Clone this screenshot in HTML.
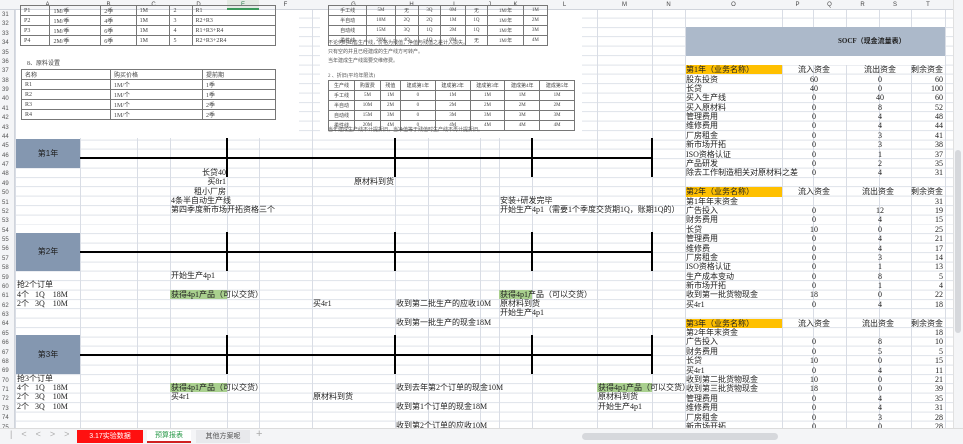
<!DOCTYPE html>
<html><head><meta charset="utf-8"><style>
*{margin:0;padding:0;box-sizing:border-box}
body{width:963px;height:444px;overflow:hidden;background:#fff;position:relative;font-family:"Liberation Sans","Noto Sans CJK SC",sans-serif;color:#222}
.a{position:absolute}
.t{position:absolute;font-size:8px;line-height:9px;white-space:nowrap;font-family:"Liberation Serif","Noto Sans CJK SC",serif}
.r{text-align:right}
.c{text-align:center}
.v{position:absolute;top:10px;height:418px;width:1px;background:#d9dde5}
.tl{position:absolute;width:2px;background:#000}
.pic{position:absolute;background:#fff}
table{border-collapse:collapse;position:absolute;font-size:6px;font-family:"Liberation Serif","Noto Sans CJK SC",serif;color:#444}
td{border:1px solid #777;padding:0 3px;height:10px;white-space:nowrap}
.g{background:#a9d08e}
.o{background:#ffc000}
.hd{position:absolute;top:0;height:10px;font-size:6px;line-height:10px;text-align:center;color:#444}
</style></head><body>
<!-- grid rows -->
<div class="a" style="left:15px;top:9px;width:940px;height:419px;background:repeating-linear-gradient(to bottom,transparent 0,transparent 8.4px,#dfe3ea 8.4px,#dfe3ea 9.38px);background-position:0 0.1px"></div>
<!-- vertical lines -->
<div class="v" style="left:15px"></div><div class="v" style="left:80px"></div><div class="v" style="left:137px"></div><div class="v" style="left:170px"></div><div class="v" style="left:227px"></div><div class="v" style="left:259px"></div><div class="v" style="left:312px"></div><div class="v" style="left:395px"></div><div class="v" style="left:428px"></div><div class="v" style="left:480px"></div><div class="v" style="left:499px"></div><div class="v" style="left:532px"></div><div class="v" style="left:597px"></div><div class="v" style="left:652px"></div><div class="v" style="left:685px"></div><div class="v" style="left:782px"></div><div class="v" style="left:813px"></div><div class="v" style="left:846px"></div><div class="v" style="left:879px"></div><div class="v" style="left:911px"></div><div class="v" style="left:945px"></div>
<!-- header row -->
<div class="a" style="left:0;top:0;width:963px;height:10px;background:#f4f5f7;border-bottom:1px solid #d0d4db"></div>
<div class="a" style="left:227px;top:0;width:32px;height:10px;background:#e4ebe4;border-bottom:2px solid #3a9a5a"></div>
<div class="hd" style="left:15px;width:65px">A</div><div class="hd" style="left:80px;width:57px">B</div><div class="hd" style="left:137px;width:33px">C</div><div class="hd" style="left:170px;width:57px">D</div><div class="hd" style="left:227px;width:32px;color:#2a7a4a">E</div><div class="hd" style="left:259px;width:53px">F</div><div class="hd" style="left:312px;width:83px">G</div><div class="hd" style="left:395px;width:33px">H</div><div class="hd" style="left:428px;width:52px">I</div><div class="hd" style="left:480px;width:19px">J</div><div class="hd" style="left:499px;width:33px">K</div><div class="hd" style="left:532px;width:65px">L</div><div class="hd" style="left:597px;width:55px">M</div><div class="hd" style="left:652px;width:33px">N</div><div class="hd" style="left:685px;width:97px">O</div><div class="hd" style="left:782px;width:31px">P</div><div class="hd" style="left:813px;width:33px">Q</div><div class="hd" style="left:846px;width:33px">R</div><div class="hd" style="left:879px;width:32px">S</div><div class="hd" style="left:911px;width:34px">T</div>
<!-- row numbers -->
<div class="a" style="left:0;top:10px;width:15px;height:418px;background:#f4f5f7;border-right:1px solid #d0d4db;font-size:6px;line-height:9.38px;color:#555;padding-left:2px;padding-top:1px">31<br>32<br>33<br>34<br>35<br>36<br>37<br>38<br>39<br>40<br>41<br>42<br>43<br>44<br>45<br>46<br>47<br>48<br>49<br>50<br>51<br>52<br>53<br>54<br>55<br>56<br>57<br>58<br>59<br>60<br>61<br>62<br>63<br>64<br>65<br>66<br>67<br>68<br>69<br>70<br>71<br>72<br>73<br>74<br>75</div>

<!-- pictures top -->
<div class="pic" style="left:16px;top:10px;width:283px;height:128px"></div>
<div class="pic" style="left:320px;top:10px;width:262px;height:128px"></div>
<table style="left:20px;top:5px;width:256px"><tr><td>P1</td><td>1M/季</td><td>2季</td><td>1M</td><td>2</td><td>R1</td></tr><tr><td>P2</td><td>1M/季</td><td>4季</td><td>1M</td><td>3</td><td>R2+R3</td></tr><tr><td>P3</td><td>1M/季</td><td>6季</td><td>1M</td><td>4</td><td>R1+R3+R4</td></tr><tr><td>P4</td><td>2M/季</td><td>6季</td><td>1M</td><td>5</td><td>R2+R3+2R4</td></tr></table>
<div class="t" style="left:27px;top:60px;font-size:6px;color:#444">8、原料设置</div>
<table style="left:21px;top:69px;width:255px"><tr><td style="width:89px">名称</td><td style="width:92px">购买价格</td><td>提前期</td></tr><tr><td>R1</td><td>1M/个</td><td>1季</td></tr><tr><td>R2</td><td>1M/个</td><td>1季</td></tr><tr><td>R3</td><td>1M/个</td><td>2季</td></tr><tr><td>R4</td><td>1M/个</td><td>2季</td></tr></table>
<table style="left:328px;top:5px;width:220px;font-size:5px;text-align:center"><tr><td>手工线</td><td>5M</td><td>无</td><td>3Q</td><td>0M</td><td>无</td><td>1M/年</td><td>1M</td></tr><tr><td>半自动</td><td>10M</td><td>2Q</td><td>2Q</td><td>1M</td><td>1Q</td><td>1M/年</td><td>2M</td></tr><tr><td>自动线</td><td>15M</td><td>3Q</td><td>1Q</td><td>2M</td><td>1Q</td><td>1M/年</td><td>3M</td></tr><tr><td>柔性线</td><td>20M</td><td>4Q</td><td>1Q</td><td>0M</td><td>无</td><td>1M/年</td><td>4M</td></tr></table>
<div class="t" style="left:328px;top:39px;font-size:5px;line-height:9px;color:#555">不论何时出售生产线，价格为残值，净值与残值之差计入损失。<br>只有空的并且已经建成的生产线方可转产。<br>当年建成生产线需要交维修费。</div>
<div class="t" style="left:328px;top:72px;font-size:5px;color:#555">2 、折旧(平均年限法)</div>
<table style="left:328px;top:80px;width:247px;font-size:5px;text-align:center"><tr><td>生产线</td><td>购置费</td><td>残值</td><td>建成第1年</td><td>建成第2年</td><td>建成第3年</td><td>建成第4年</td><td>建成第5年</td></tr><tr><td>手工线</td><td>5M</td><td>1M</td><td>0</td><td>1M</td><td>1M</td><td>1M</td><td>1M</td></tr><tr><td>半自动</td><td>10M</td><td>2M</td><td>0</td><td>2M</td><td>2M</td><td>2M</td><td>2M</td></tr><tr><td>自动线</td><td>15M</td><td>3M</td><td>0</td><td>3M</td><td>3M</td><td>3M</td><td>3M</td></tr><tr><td>柔性线</td><td>20M</td><td>4M</td><td>0</td><td>4M</td><td>4M</td><td>4M</td><td>4M</td></tr></table>
<div class="t" style="left:328px;top:126px;font-size:5px;color:#555">当年建成生产线不计提折旧，当净值等于残值时生产线不再计提折旧。</div>

<!-- year blocks -->
<div class="a" style="left:16px;top:139px;width:64px;height:29px;background:#8497b0;font-size:8px;line-height:29px;text-align:center">第1年</div>
<div class="a" style="left:80px;top:157px;width:572px;height:2px;background:#000"></div>
<div class="tl" style="left:226px;top:138px;height:39px"></div><div class="tl" style="left:394px;top:138px;height:39px"></div><div class="tl" style="left:531px;top:138px;height:39px"></div><div class="tl" style="left:651px;top:138px;height:39px"></div>
<div class="a" style="left:16px;top:233px;width:64px;height:38px;background:#8497b0;font-size:8px;line-height:38px;text-align:center">第2年</div>
<div class="a" style="left:80px;top:251px;width:572px;height:2px;background:#000"></div>
<div class="tl" style="left:226px;top:232px;height:39px"></div><div class="tl" style="left:394px;top:232px;height:39px"></div><div class="tl" style="left:531px;top:232px;height:39px"></div><div class="tl" style="left:651px;top:232px;height:39px"></div>
<div class="a" style="left:16px;top:335px;width:64px;height:39px;background:#8497b0;font-size:8px;line-height:39px;text-align:center">第3年</div>
<div class="a" style="left:80px;top:354px;width:572px;height:2px;background:#000"></div>
<div class="tl" style="left:226px;top:335px;height:39px"></div><div class="tl" style="left:394px;top:335px;height:39px"></div><div class="tl" style="left:531px;top:335px;height:39px"></div><div class="tl" style="left:651px;top:335px;height:39px"></div>

<!-- year1 notes -->
<div class="t r" style="left:150px;width:76px;top:168px">长贷40</div>
<div class="t r" style="left:150px;width:76px;top:177px">买8r1</div>
<div class="t r" style="left:150px;width:76px;top:187px">租小厂房</div>
<div class="t" style="left:171px;top:196px">4条半自动生产线</div>
<div class="t" style="left:171px;top:205px">第四季度新市场开拓资格三个</div>
<div class="t r" style="left:300px;width:94px;top:177px">原材料到货</div>
<div class="t" style="left:500px;top:196px">安装+研发完毕</div>
<div class="t" style="left:500px;top:205px">开始生产4p1（需要1个季度交货期1Q，账期1Q的）</div>
<!-- year2 notes -->
<div class="t" style="left:171px;top:271px">开始生产4p1</div>
<div class="t" style="left:17px;top:280px">抢2个订单</div>
<div class="t" style="left:17px;top:290px">4个&nbsp;&nbsp;&nbsp;1Q&nbsp;&nbsp;&nbsp;&nbsp;18M</div>
<div class="t" style="left:17px;top:299px">2个&nbsp;&nbsp;&nbsp;3Q&nbsp;&nbsp;&nbsp;&nbsp;10M</div>
<div class="a g" style="left:170px;top:290px;width:57px;height:9px"></div>
<div class="t" style="left:171px;top:290px">获得4p1产品（可以交货）</div>
<div class="t" style="left:313px;top:299px">买4r1</div>
<div class="t" style="left:396px;top:299px">收到第二批生产的应收10M</div>
<div class="t" style="left:396px;top:318px">收到第一批生产的现金18M</div>
<div class="a g" style="left:499px;top:290px;width:33px;height:9px"></div>
<div class="t" style="left:500px;top:290px">获得4p1产品（可以交货）</div>
<div class="t" style="left:500px;top:299px">原材料到货</div>
<div class="t" style="left:500px;top:308px">开始生产4p1</div>
<!-- year3 notes -->
<div class="t" style="left:17px;top:374px">抢3个订单</div>
<div class="t" style="left:17px;top:383px">4个&nbsp;&nbsp;&nbsp;1Q&nbsp;&nbsp;&nbsp;&nbsp;18M</div>
<div class="t" style="left:17px;top:392px">2个&nbsp;&nbsp;&nbsp;3Q&nbsp;&nbsp;&nbsp;&nbsp;10M</div>
<div class="t" style="left:17px;top:402px">2个&nbsp;&nbsp;&nbsp;3Q&nbsp;&nbsp;&nbsp;&nbsp;10M</div>
<div class="a g" style="left:170px;top:383px;width:57px;height:9px"></div>
<div class="t" style="left:171px;top:383px">获得4p1产品（可以交货）</div>
<div class="t" style="left:171px;top:392px">买4r1</div>
<div class="t" style="left:313px;top:392px">原材料到货</div>
<div class="t" style="left:396px;top:383px">收到去年第2个订单的现金10M</div>
<div class="t" style="left:396px;top:402px">收到第1个订单的现金18M</div>
<div class="t" style="left:396px;top:421px">收到第2个订单的应收10M</div>
<div class="a g" style="left:597px;top:383px;width:55px;height:9px"></div>
<div class="t" style="left:598px;top:383px">获得4p1产品（可以交货）</div>
<div class="t" style="left:598px;top:392px">原材料到货</div>
<div class="t" style="left:598px;top:402px">开始生产4p1</div>

<!-- SOCF -->
<div class="a" style="left:686px;top:27px;width:259px;height:29px;background:#acb9ca;font-size:7px;line-height:29px;font-weight:bold;padding-left:152px;font-family:'Liberation Serif','Noto Sans CJK SC',serif">SOCF（现金流量表）</div>
<div class="a" style="left:686px;top:56px;width:259px;height:9px;background:#fff"></div>

<div class="a" style="left:686px;top:65px;width:259px;font-size:8px;line-height:9.4px;font-family:'Liberation Serif','Noto Sans CJK SC',serif">
<div style="position:relative;height:9.4px"><span class="o" style="position:absolute;left:0;width:96px">第1年（业务名称）</span><span style="position:absolute;left:112px">流入资金</span><span style="position:absolute;left:178px">流出资金</span><span style="position:absolute;right:2px">剩余资金</span></div>
</div>

<div class="a" id="s1" style="left:686px;top:74.5px;width:259px;font-size:8px;line-height:9.4px;font-family:'Liberation Serif','Noto Sans CJK SC',serif">
<style>.rw{position:relative;height:9.4px}.rw b{font-weight:normal;position:absolute;left:0}.rw i{font-style:normal;position:absolute;left:116px;width:24px;text-align:center}.rw u{text-decoration:none;position:absolute;left:182px;width:24px;text-align:center}.rw s{text-decoration:none;position:absolute;right:2px}</style>
<div class="rw"><b>股东投资</b><i>60</i><u>0</u><s>60</s></div>
<div class="rw"><b>长贷</b><i>40</i><u>0</u><s>100</s></div>
<div class="rw"><b>买入生产线</b><i>0</i><u>40</u><s>60</s></div>
<div class="rw"><b>买入原材料</b><i>0</i><u>8</u><s>52</s></div>
<div class="rw"><b>管理费用</b><i>0</i><u>4</u><s>48</s></div>
<div class="rw"><b>维修费用</b><i>0</i><u>4</u><s>44</s></div>
<div class="rw"><b>厂房租金</b><i>0</i><u>3</u><s>41</s></div>
<div class="rw"><b>新市场开拓</b><i>0</i><u>3</u><s>38</s></div>
<div class="rw"><b>ISO资格认证</b><i>0</i><u>1</u><s>37</s></div>
<div class="rw"><b>产品研发</b><i>0</i><u>2</u><s>35</s></div>
<div class="rw"><b>除去工作制造相关对原材料之差</b><i>0</i><u>4</u><s>31</s></div>
<div class="rw"></div>
<div class="rw"><b class="o" style="width:96px">第2年（业务名称）</b><i style="left:108px;width:40px">流入资金</i><u style="left:172px;width:40px">流出资金</u><s>剩余资金</s></div>
<div class="rw"><b>第1年年末资金</b><s>31</s></div>
<div class="rw"><b>广告投入</b><i>0</i><u>12</u><s>19</s></div>
<div class="rw"><b>财务费用</b><i>0</i><u>4</u><s>15</s></div>
<div class="rw"><b>长贷</b><i>10</i><u>0</u><s>25</s></div>
<div class="rw"><b>管理费用</b><i>0</i><u>4</u><s>21</s></div>
<div class="rw"><b>维修费</b><i>0</i><u>4</u><s>17</s></div>
<div class="rw"><b>厂房租金</b><i>0</i><u>3</u><s>14</s></div>
<div class="rw"><b>ISO资格认证</b><i>0</i><u>1</u><s>13</s></div>
<div class="rw"><b>生产成本变动</b><i>0</i><u>8</u><s>5</s></div>
<div class="rw"><b>新市场开拓</b><i>0</i><u>1</u><s>4</s></div>
<div class="rw"><b>收到第一批货物现金</b><i>18</i><u>0</u><s>22</s></div>
<div class="rw"><b>买4r1</b><i>0</i><u>4</u><s>18</s></div>
<div class="rw"></div>
<div class="rw"><b class="o" style="width:96px">第3年（业务名称）</b><i style="left:108px;width:40px">流入资金</i><u style="left:172px;width:40px">流出资金</u><s>剩余资金</s></div>
<div class="rw"><b>第2年年末资金</b><s>18</s></div>
<div class="rw"><b>广告投入</b><i>0</i><u>8</u><s>10</s></div>
<div class="rw"><b>财务费用</b><i>0</i><u>5</u><s>5</s></div>
<div class="rw"><b>长贷</b><i>10</i><u>0</u><s>15</s></div>
<div class="rw"><b>买4r1</b><i>0</i><u>4</u><s>11</s></div>
<div class="rw"><b>收到第二批货物现金</b><i>10</i><u>0</u><s>21</s></div>
<div class="rw"><b>收到第三批货物现金</b><i>18</i><u>0</u><s>39</s></div>
<div class="rw"><b>管理费用</b><i>0</i><u>4</u><s>35</s></div>
<div class="rw"><b>维修费用</b><i>0</i><u>4</u><s>31</s></div>
<div class="rw"><b>厂房租金</b><i>0</i><u>3</u><s>28</s></div>
<div class="rw"><b>新市场开拓</b><i>0</i><u>0</u><s>28</s></div>
</div>

<!-- vertical scrollbar -->
<div class="a" style="left:953px;top:0;width:10px;height:428px;background:#f4f5f7;border-left:1px solid #e0e0e0"></div>
<div class="a" style="left:955px;top:150px;width:6px;height:183px;background:#d6d8dc;border-radius:3px"></div>
<!-- tab bar -->
<div class="a" style="left:0;top:428px;width:963px;height:16px;background:#f4f5f7;border-top:1px solid #dcdcdc"></div>
<div class="a" style="left:10px;top:429px;font-size:9px;color:#aaa;letter-spacing:9px">|&lt;&lt;&gt;&gt;|</div>
<div class="a" style="left:77px;top:430px;width:66px;height:13px;background:#ff1010;color:#fff;font-size:7px;line-height:13px;text-align:center">3.17实验数据</div>
<div class="a" style="left:147px;top:430px;width:44px;height:13px;background:#fff;color:#2a9a4a;font-size:7px;line-height:12px;text-align:center;border-bottom:2px solid #d02020">预算报表</div>
<div class="a" style="left:196px;top:430px;width:54px;height:13px;background:#e8e9ec;color:#555;font-size:7px;line-height:13px;text-align:center">其他方案呢</div>
<div class="a" style="left:256px;top:428px;font-size:11px;color:#aaa">+</div>
<div class="a" style="left:582px;top:433px;width:196px;height:7px;background:#d6d8dc;border-radius:4px"></div>
</body></html>
